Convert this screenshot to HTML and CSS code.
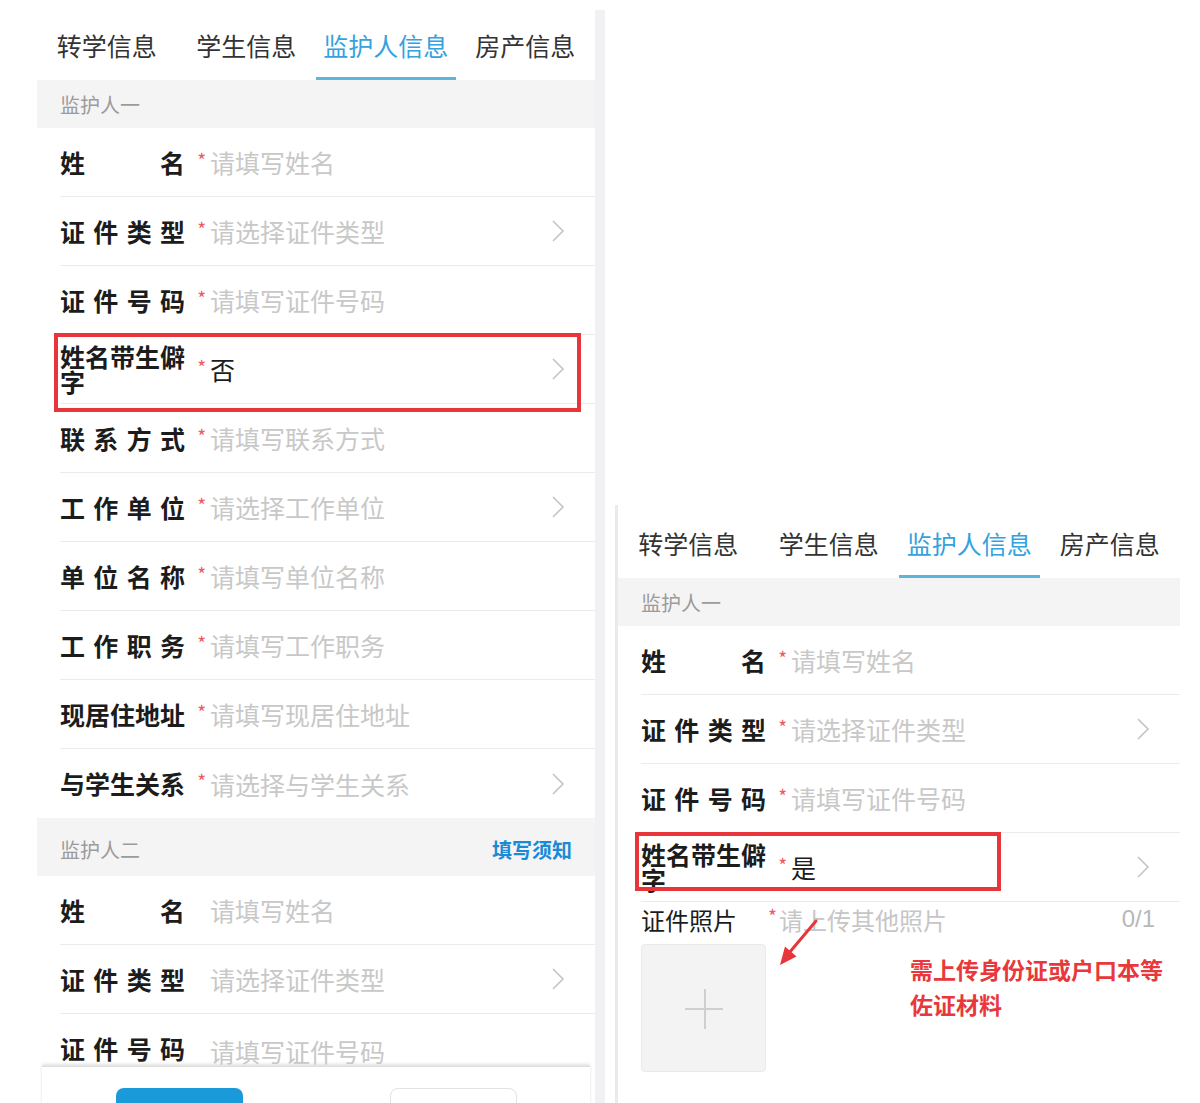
FILE: index.html
```html
<!DOCTYPE html>
<html lang="zh-CN">
<head>
<meta charset="utf-8">
<title>监护人信息</title>
<link rel="stylesheet" href="styles.css">
</head>
<body>
<main class="canvas">
  <div class="shot shot-left">
    <section class="screen screen-left">
      <nav class="tabs">
        <div class="tab">转学信息</div>
        <div class="tab">学生信息</div>
        <div class="tab active">监护人信息</div>
        <div class="tab">房产信息</div>
      </nav>
      <div class="group-head">监护人一</div>
      <div class="row"><span class="label">姓名</span><span class="star">*</span><span class="value">请填写姓名</span></div>
      <div class="row"><span class="label">证件类型</span><span class="star">*</span><span class="value">请选择证件类型</span><svg class="chev" viewBox="0 0 14 24"><path d="M2 2 L12 12 L2 22"/></svg></div>
      <div class="row"><span class="label">证件号码</span><span class="star">*</span><span class="value">请填写证件号码</span></div>
      <div class="row"><span class="label">姓名带生僻字</span><span class="star">*</span><span class="value filled">否</span><svg class="chev" viewBox="0 0 14 24"><path d="M2 2 L12 12 L2 22"/></svg><span class="mark mark-left"></span></div>
      <div class="row"><span class="label">联系方式</span><span class="star">*</span><span class="value">请填写联系方式</span></div>
      <div class="row"><span class="label">工作单位</span><span class="star">*</span><span class="value">请选择工作单位</span><svg class="chev" viewBox="0 0 14 24"><path d="M2 2 L12 12 L2 22"/></svg></div>
      <div class="row"><span class="label">单位名称</span><span class="star">*</span><span class="value">请填写单位名称</span></div>
      <div class="row"><span class="label">工作职务</span><span class="star">*</span><span class="value">请填写工作职务</span></div>
      <div class="row"><span class="label">现居住地址</span><span class="star">*</span><span class="value">请填写现居住地址</span></div>
      <div class="row row-last"><span class="label">与学生关系</span><span class="star">*</span><span class="value">请选择与学生关系</span><svg class="chev" viewBox="0 0 14 24"><path d="M2 2 L12 12 L2 22"/></svg></div>
      <div class="group-head group-head-tall"><span>监护人二</span><a class="notice">填写须知</a></div>
      <div class="row"><span class="label">姓名</span><span class="star"></span><span class="value">请填写姓名</span></div>
      <div class="row"><span class="label">证件类型</span><span class="star"></span><span class="value">请选择证件类型</span><svg class="chev" viewBox="0 0 14 24"><path d="M2 2 L12 12 L2 22"/></svg></div>
      <div class="row row-clipped"><span class="label">证件号码</span><span class="star"></span><span class="value">请填写证件号码</span></div>
      <div class="bottom-bar">
        <button class="btn btn-primary" aria-label="下一步"></button>
        <button class="btn btn-plain" aria-label="上一步"></button>
      </div>
    </section>
    <div class="scroll-track"></div>
  </div>

  <div class="shot shot-right">
    <section class="screen screen-right">
      <nav class="tabs tabs-short">
        <div class="tab">转学信息</div>
        <div class="tab">学生信息</div>
        <div class="tab active">监护人信息</div>
        <div class="tab">房产信息</div>
      </nav>
      <div class="group-head">监护人一</div>
      <div class="row"><span class="label">姓名</span><span class="star">*</span><span class="value">请填写姓名</span></div>
      <div class="row"><span class="label">证件类型</span><span class="star">*</span><span class="value">请选择证件类型</span><svg class="chev" viewBox="0 0 14 24"><path d="M2 2 L12 12 L2 22"/></svg></div>
      <div class="row"><span class="label">证件号码</span><span class="star">*</span><span class="value">请填写证件号码</span></div>
      <div class="row"><span class="label">姓名带生僻字</span><span class="star">*</span><span class="value filled">是</span><svg class="chev" viewBox="0 0 14 24"><path d="M2 2 L12 12 L2 22"/></svg><span class="mark mark-right"></span></div>
      <div class="photo-row">
        <div class="photo-head">
          <span class="photo-label">证件照片</span>
          <span class="photo-star">*</span>
          <span class="photo-hint">请上传其他照片</span>
          <span class="photo-count">0/1</span>
        </div>
        <div class="photo-body">
          <div class="upload"><span class="plus-h"></span><span class="plus-v"></span></div>
          <p class="note">需上传身份证或户口本等<br>佐证材料</p>
        </div>
        <svg class="arrow" viewBox="0 0 60 60" width="60" height="60">
          <line x1="45" y1="5" x2="18" y2="37" stroke="#e8353b" stroke-width="3" stroke-linecap="round"/>
          <polygon points="9,49 25.5,40.5 14,30.5" fill="#e8353b"/>
        </svg>
      </div>
    </section>
  </div>
</main>
</body>
</html>
```
FILE: styles.css
```css
* {
  box-sizing: border-box;
  margin: 0;
  padding: 0;
}

html, body {
  background: #ffffff;
}

body {
  width: 1200px;
  height: 1103px;
  overflow: hidden;
  font-family: "Noto Sans CJK SC", "Noto Sans", sans-serif;
  color: #222222;
}

.canvas {
  display: flex;
  align-items: flex-start;
  padding-left: 37px;
  height: 1103px;
}

.shot-left {
  display: flex;
  align-items: flex-start;
  height: 1103px;
}

.screen {
  display: flex;
  flex-direction: column;
  background: #ffffff;
  overflow: hidden;
}

.screen-left {
  width: 558px;
  height: 1103px;
}

.scroll-track {
  width: 10px;
  height: 1093px;
  margin-top: 10px;
  background: #f1f1f3;
}

.shot-right {
  margin-left: 10px;
  margin-top: 505px;
  border-left: 3px solid #eaeaea;
}

.screen-right {
  width: 562px;
  height: 598px;
}

/* tabs */
.tabs {
  display: flex;
  height: 80px;
  flex: none;
}

.tab {
  flex: 1;
  text-align: center;
  padding-top: 28px;
  font-size: 25px;
  line-height: 34px;
  color: #333333;
  border-bottom: 3px solid transparent;
}

.tabs-short {
  height: 73px;
}

.tabs-short .tab {
  padding-top: 21px;
}

.tab.active {
  color: #34a2de;
  border-bottom-color: #5db5d9;
}

/* group header */
.group-head {
  flex: none;
  display: flex;
  align-items: center;
  justify-content: space-between;
  height: 48px;
  padding: 0 23px;
  background: #f4f4f5;
  font-size: 20px;
  color: #9b9b9b;
}

.group-head-tall {
  height: 58px;
  padding-top: 4px;
}

.notice {
  color: #1b8ad6;
  font-weight: 700;
}

/* form rows */
.row {
  position: relative;
  flex: none;
  display: flex;
  align-items: center;
  height: 69px;
  margin-left: 23px;
  padding-right: 30px;
  border-bottom: 1px solid #ebebeb;
}

.row-last {
  border-bottom: none;
}

.row-clipped {
  height: 52px;
  align-items: flex-start;
  padding-top: 22px;
  border-bottom: none;
}

.label {
  flex: none;
  width: 125px;
  font-size: 25px;
  line-height: 25px;
  font-weight: 700;
  color: #1c1c1c;
  text-align: justify;
  text-align-last: justify;
}

.star {
  flex: none;
  width: 25px;
  padding-right: 4px;
  text-align: right;
  font-size: 19px;
  line-height: 25px;
  color: #ef5a5f;
  align-self: center;
  margin-top: -6px;
}

.row-clipped .star {
  align-self: flex-start;
}

.value {
  flex: 1;
  font-size: 25px;
  line-height: 30px;
  color: #c8c8c8;
  white-space: nowrap;
}

.value.filled {
  color: #1c1c1c;
}

.chev {
  flex: none;
  width: 14px;
  height: 24px;
}

.chev path {
  fill: none;
  stroke: #c4c4c4;
  stroke-width: 1.6;
}

/* annotation boxes */
.mark {
  position: absolute;
  border: 4px solid #e8353b;
}

.mark-left {
  left: -6px;
  top: -2px;
  width: 527px;
  height: 79px;
}

.mark-right {
  left: -6px;
  top: -1px;
  width: 366px;
  height: 59px;
}

/* bottom bar */
.bottom-bar {
  flex: 1;
  display: flex;
  justify-content: space-around;
  align-items: flex-start;
  margin: 0 5px;
  padding-top: 21px;
  border-top: 1px solid #dedede;
  box-shadow: 0 -2px 3px rgba(0, 0, 0, 0.12);
  background: #ffffff;
}

.btn {
  width: 127px;
  height: 52px;
  border-radius: 8px;
}

.btn-primary {
  border: none;
  background: #1a9ad8;
}

.btn-plain {
  border: 1px solid #e2e2e2;
  background: #ffffff;
}

/* photo row */
.photo-row {
  position: relative;
  flex: 1;
  margin-left: 23px;
}

.photo-head {
  display: flex;
  align-items: center;
  height: 34px;
  padding-right: 25px;
}

.photo-label {
  width: 127px;
  font-size: 24px;
  color: #1c1c1c;
}

.photo-star {
  width: 11px;
  font-size: 19px;
  color: #ef5a5f;
  margin-top: -8px;
}

.photo-hint {
  flex: 1;
  font-size: 24px;
  color: #c6c6c6;
}

.photo-count {
  font-family: "Liberation Sans", Arial, sans-serif;
  font-size: 24px;
  color: #b8b8b8;
}

.photo-body {
  display: flex;
  align-items: flex-start;
  margin-top: 8px;
}

.upload {
  position: relative;
  width: 125px;
  height: 128px;
  flex: none;
  background: #f3f3f4;
  border: 1px solid #eaeaea;
  border-radius: 4px;
}

.plus-h {
  position: absolute;
  left: 43px;
  top: 63px;
  width: 38px;
  height: 2px;
  background: #cfcfcf;
}

.plus-v {
  position: absolute;
  left: 62px;
  top: 44px;
  width: 2px;
  height: 40px;
  background: #cfcfcf;
}

.note {
  margin-left: 144px;
  margin-top: 8px;
  font-size: 23px;
  line-height: 35px;
  font-weight: 700;
  color: #e8383c;
  white-space: nowrap;
}

.arrow {
  position: absolute;
  left: 130px;
  top: 14px;
}
```
